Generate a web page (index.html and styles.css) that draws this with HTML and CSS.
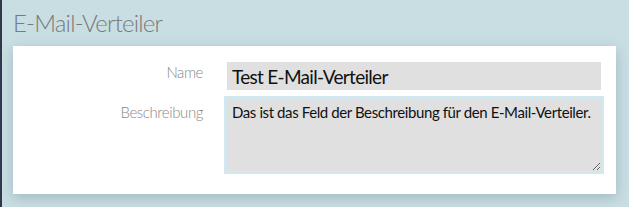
FILE: index.html
```html
<!DOCTYPE html>
<html lang="de">
<head>
    <meta charset="UTF-8">
    <meta name="viewport" content="width=device-width, initial-scale=1.0">
    <title>E-Mail-Verteiler</title>
    <link rel="stylesheet" href="styles.css">
</head>
<body>
    <div class="page">
        <h1>E-Mail-Verteiler</h1>

        <div class="card">
            <form class="form-grid">
                <label class="field-label" for="name-input">Name</label>
                <input id="name-input" class="field-input" type="text" value="Test E-Mail-Verteiler">

                <label class="field-label field-label-area" for="desc-input">Beschreibung</label>
                <textarea id="desc-input" class="field-area">Das ist das Feld der Beschreibung für den E-Mail-Verteiler.</textarea>
            </form>
        </div>
    </div>
</body>
</html>
```

FILE: styles.css
```css
* {
    margin: 0;
    padding: 0;
    box-sizing: border-box;
    font-family: Lato, 'Open Sans', sans-serif;
}

body {
    min-height: 100vh;
    background-color: #c9dee3;
    border-left: 2px solid #30384a;
}

.page {
    padding: 8px 13px 0 11px;
}

h1 {
    font-size: 24px;
    font-weight: 300;
    line-height: 29px;
    letter-spacing: -0.8px;
    color: #7a7a7a;
}

.card {
    margin-top: 9px;
    width: 603px;
    padding: 13px 12px 20px 0;
    background-color: white;
    box-shadow: 0 4px 12px rgba(40, 80, 90, 0.25);
}

.form-grid {
    display: grid;
    grid-template-columns: 190px 380px;
    column-gap: 21px;
    row-gap: 3px;
}

.field-label {
    text-align: right;
    padding-top: 4px;
    font-size: 15px;
    font-weight: 300;
    line-height: 18px;
    letter-spacing: -0.4px;
    color: #888;
}

.field-label-area {
    padding-top: 7px;
}

.field-input,
.field-area {
    width: 100%;
    background-color: #e0e0e0;
    color: #111;
    outline: none;
}

.field-input {
    height: 34px;
    padding: 0 5px;
    border: 3px solid white;
    font-size: 19px;
    letter-spacing: -0.7px;
}

.field-area {
    height: 78px;
    padding: 4px 5px;
    border: 3px solid #d2e7ee;
    font-size: 15px;
    line-height: 18px;
    letter-spacing: -0.4px;
    resize: vertical;
}
```
